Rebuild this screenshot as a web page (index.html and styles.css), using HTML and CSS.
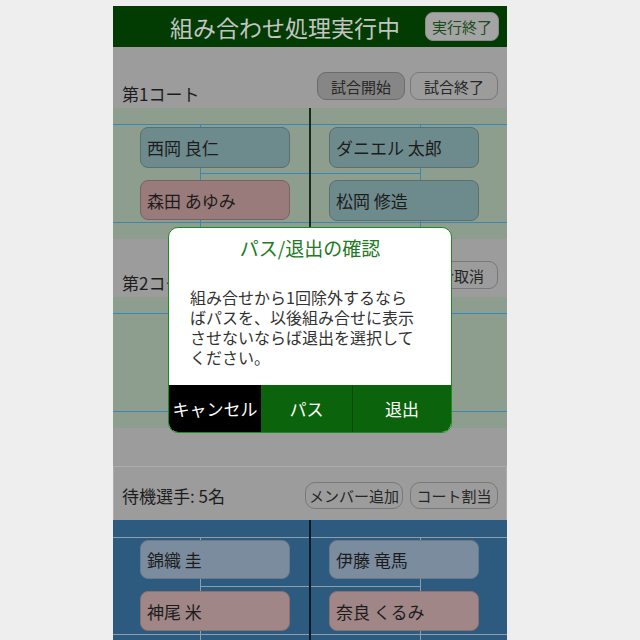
FILE: index.html
```html
<!DOCTYPE html>
<html lang="ja">
<head>
<meta charset="utf-8">
<title>組み合わせ処理実行中</title>
<link rel="stylesheet" href="styles.css">
</head>
<body>
<div class="app">
  <header class="topbar">
    <div class="title">組み合わせ処理実行中</div>
    <div class="end-btn">実行終了</div>
  </header>

  <section class="section first">
    <div class="sec-head">
      <div class="label">第1コート</div>
      <div class="btns">
        <div class="btn pressed">試合開始</div>
        <div class="btn">試合終了</div>
      </div>
    </div>
    <div class="court green">
      <svg class="lines" width="394" height="131" viewBox="0 0 394 131">
        <line x1="0" y1="16.5" x2="394" y2="16.5" class="ln"/>
        <line x1="0" y1="114.5" x2="394" y2="114.5" class="ln"/>
        <line x1="87.5" y1="16" x2="87.5" y2="120" class="ln"/>
        <line x1="307.5" y1="16" x2="307.5" y2="120" class="ln"/>
        <line x1="87" y1="65.5" x2="308" y2="65.5" class="ln"/>
        <line x1="197" y1="0" x2="197" y2="131" class="div"/>
      </svg>
      <div class="pairs">
        <div class="half left">
          <div class="card blue">西岡 良仁</div>
          <div class="card pink">森田 あゆみ</div>
        </div>
        <div class="half right">
          <div class="card blue">ダニエル 太郎</div>
          <div class="card blue">松岡 修造</div>
        </div>
      </div>
    </div>
  </section>

  <section class="section">
    <div class="sec-head">
      <div class="label">第2コート</div>
      <div class="btns">
        <div class="btn">試合開始</div>
        <div class="btn">試合取消</div>
      </div>
    </div>
    <div class="court green">
      <svg class="lines" width="394" height="131" viewBox="0 0 394 131">
        <line x1="0" y1="16.5" x2="394" y2="16.5" class="ln"/>
        <line x1="0" y1="114.5" x2="394" y2="114.5" class="ln"/>
      </svg>
    </div>
  </section>

  <section class="waiting">
    <div class="wait-head">
      <div class="label">待機選手: 5名</div>
      <div class="btns">
        <div class="btn wide">メンバー追加</div>
        <div class="btn">コート割当</div>
      </div>
    </div>
    <div class="court bluebg">
      <svg class="lines" width="394" height="131" viewBox="0 0 394 131">
        <line x1="0" y1="17.5" x2="394" y2="17.5" class="lnw"/>
        <line x1="0" y1="114.5" x2="394" y2="114.5" class="lnw"/>
        <line x1="87.5" y1="17" x2="87.5" y2="120" class="lnw"/>
        <line x1="307.5" y1="17" x2="307.5" y2="120" class="lnw"/>
        <line x1="87" y1="66.5" x2="308" y2="66.5" class="lnw"/>
        <line x1="197" y1="0" x2="197" y2="131" class="divb"/>
      </svg>
      <div class="pairs low">
        <div class="half left">
          <div class="card wblue">錦織 圭</div>
          <div class="card wpink">神尾 米</div>
        </div>
        <div class="half right">
          <div class="card wblue">伊藤 竜馬</div>
          <div class="card wpink">奈良 くるみ</div>
        </div>
      </div>
    </div>
  </section>
</div>

<div class="dialog">
  <div class="dlg-title">パス/退出の確認</div>
  <div class="dlg-body">組み合せから1回除外するなら<br>ばパスを、以後組み合せに表示<br>させないならば退出を選択して<br>ください。</div>
  <div class="dlg-btns">
    <div class="dbtn cancel">キャンセル</div>
    <div class="dbtn pass">パス</div>
    <div class="dbtn exit">退出</div>
  </div>
</div>
</body>
</html>
```

FILE: styles.css
```css
html, body {
  margin: 0;
  padding: 0;
  background: #eeeeee;
  overflow: hidden;
  height: 640px;
}
body {
  font-family: "Noto Sans CJK JP", "Noto Sans", sans-serif;
  color: #1c1c1c;
}
.app {
  width: 394px;
  margin-left: 113px;
  margin-top: 6px;
  background: #9c9c9c;
}
.topbar {
  height: 41px;
  background: #023c02;
  display: flex;
  align-items: center;
}
.title {
  flex: 1;
  padding-left: 57px;
  font-size: 23px;
  color: #c4c4c4;
  line-height: 30px;
}
.end-btn {
  width: 74px;
  height: 29px;
  margin-right: 8px;
  background: #a4a4a4;
  border-radius: 8px;
  color: #1b4d1b;
  font-size: 15px;
  display: flex;
  align-items: center;
  justify-content: center;
  box-sizing: border-box;
  border: 1px solid #8a8a8a;
}
.section.first {
  padding-top: 3px;
}
.sec-head {
  height: 58px;
  box-sizing: border-box;
  padding: 22px 9px 0 9px;
  display: flex;
  justify-content: space-between;
}
.label {
  font-size: 17px;
  line-height: 22px;
  padding-top: 11px;
  color: #1c1c1c;
}
.btns {
  display: flex;
  gap: 5px;
}
.btn {
  width: 88px;
  height: 28px;
  box-sizing: border-box;
  border: 1px solid #787878;
  border-radius: 9px;
  background: #9c9c9c;
  font-size: 15px;
  color: #262626;
  display: flex;
  align-items: center;
  justify-content: center;
}
.btn.pressed {
  background: #868686;
  border-color: #6c6c6c;
}
.btn.wide {
  width: 98px;
}
.court {
  position: relative;
  height: 131px;
  overflow: hidden;
}
.court.green {
  background: #8e9e8e;
}
.court.bluebg {
  background: #2d5a7f;
}
.lines {
  position: absolute;
  left: 0;
  top: 0;
}
.ln {
  stroke: #3888b6;
  stroke-width: 1;
}
.lnw {
  stroke: #8e9eab;
  stroke-width: 1;
}
.div {
  stroke: #1a2a1a;
  stroke-width: 2;
}
.divb {
  stroke: #0c1a28;
  stroke-width: 2;
}
.pairs {
  position: relative;
  display: grid;
  grid-template-columns: 197px 197px;
  padding-top: 19px;
}
.pairs.low {
  padding-top: 20px;
}
.half {
  display: flex;
  flex-direction: column;
  gap: 12px;
}
.half.left {
  padding-left: 27px;
}
.half.right {
  padding-left: 19px;
}
.card {
  width: 150px;
  height: 41px;
  box-sizing: border-box;
  border-radius: 8px;
  border: 1px solid #58706f;
  padding-left: 6px;
  font-size: 17px;
  color: #1c1c1c;
  display: flex;
  align-items: center;
}
.card.blue {
  background: #6d8a8c;
}
.card.pink {
  background: #9a7b7b;
  border-color: #7a6262;
  height: 40px;
}
.card.wblue {
  background: #7c8c9f;
  border-color: #6a7a8c;
  height: 39px;
}
.card.wpink {
  background: #a08686;
  border-color: #8a7070;
  height: 40px;
}
.waiting {
  margin-top: 38px;
}
.wait-head {
  height: 54px;
  box-sizing: border-box;
  border: 1px solid #acacac;
  border-bottom: none;
  padding: 15px 8px 0 8px;
  display: flex;
  justify-content: space-between;
}
.wait-head .label {
  padding-top: 3px;
}
.wait-head .btns {
  gap: 7px;
}
.wait-head .btn {
  height: 27px;
  border-radius: 10px;
}
.dialog {
  position: absolute;
  left: 168px;
  top: 227px;
  width: 284px;
  height: 206px;
  box-sizing: border-box;
  background: #ffffff;
  border: 1px solid #1f8a1f;
  border-radius: 10px;
  overflow: hidden;
  display: flex;
  flex-direction: column;
}
.dlg-title {
  padding-top: 7px;
  line-height: 26px;
  font-size: 19px;
  color: #237a23;
  text-align: center;
}
.dlg-body {
  padding: 26px 0 0 21px;
  font-size: 16px;
  line-height: 20px;
  color: #333333;
  white-space: nowrap;
}
.dlg-btns {
  margin-top: auto;
  height: 47px;
  display: grid;
  grid-template-columns: 92px 91px 1fr;
}
.dbtn {
  display: flex;
  align-items: center;
  justify-content: center;
  color: #ffffff;
  font-size: 17px;
}
.cancel {
  background: #000000;
}
.pass {
  background: #0b630b;
}
.exit {
  background: #0b630b;
  border-left: 1px solid #074a07;
}
```
